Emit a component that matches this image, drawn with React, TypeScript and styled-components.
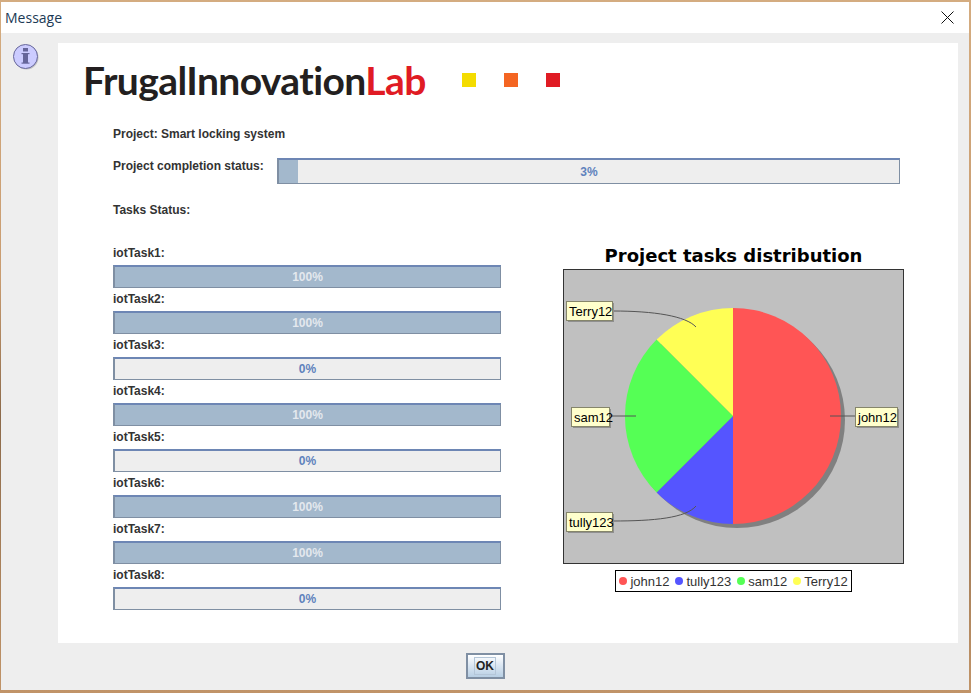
import React from 'react';
import styled, { createGlobalStyle } from 'styled-components';

const GlobalStyle = createGlobalStyle`
    html, body {
        margin: 0;
        padding: 0;
        background: #d2a87c;
    }
`

const Desktop = styled.div`
    width: 971px;
    height: 693px;
    box-sizing: border-box;
    padding: 2px 2px 3px 1px;
    overflow: hidden;
    background: linear-gradient(180deg, #d4ac80 0%, #c99c70 40%, #8c6a4a 60%, #c19468 100%);
`

const Window = styled.div`
    display: flex;
    flex-direction: column;
    height: 100%;
    background: #eeeeee;
    font-family: "Liberation Sans", Arial, sans-serif;
`

const TitleBar = styled.div`
    display: flex;
    align-items: center;
    justify-content: space-between;
    height: 31px;
    padding: 0 15px 0 4px;
    background: #fff;
    font-family: "Open Sans", sans-serif;
    font-size: 14px;
    color: #1c3a55;
`

const Body = styled.div`
    display: flex;
    padding: 10px 10px 0 0;
`

const IconGutter = styled.div`
    width: 57px;
    padding-left: 11px;
    box-sizing: border-box;
`

const Panel = styled.div`
    width: 900px;
    height: 600px;
    box-sizing: border-box;
    padding: 17px 0 0 0;
    background: #fff;
`

const LogoRow = styled.div`
    display: flex;
    align-items: center;
    height: 40px;
    padding-left: 25px;
`

const Logo = styled.div`
    width: 337px;
    margin-right: 42px;
    font-family: Lato, sans-serif;
    font-weight: 700;
    font-size: 39px;
    letter-spacing: -0.6px;
    line-height: 40px;
    white-space: nowrap;
    color: #231f20;

    span {
        color: #e01b24;
    }
`

const Square = styled.div<{ $color: string }>`
    width: 14px;
    height: 14px;
    margin-right: 28px;
    background: ${(p) => p.$color};
`

const Content = styled.div`
    padding-left: 55px;
`

const Label = styled.div`
    font-size: 12px;
    font-weight: 700;
    line-height: 16px;
    color: #333;
    white-space: nowrap;
`

const ProjectName = styled(Label)`
    margin-top: 26px;
`

const CompletionRow = styled.div`
    display: flex;
    margin-top: 16px;
`

const CompletionLabel = styled(Label)`
    width: 164px;
`

const TasksHeading = styled(Label)`
    margin-top: 18px;
`

const Columns = styled.div`
    display: flex;
    margin-top: 24px;
`

const TaskColumn = styled.div`
    width: 388px;
    margin-right: 62px;
`

const TaskLabel = styled(Label)`
    height: 23px;
    line-height: 23px;
`

const Bar = styled.div<{ $height: number; $width: number }>`
    position: relative;
    width: ${(p) => p.$width}px;
    height: ${(p) => p.$height}px;
    box-sizing: border-box;
    background: #eeeeee;
    border: 1px solid #7f8fa3;
    border-top: 2px solid #6d86b4;
    border-left: 2px solid #7f8fa3;
`

const BarFill = styled.div`
    height: 100%;
    background: #a3b8cc;
`

const BarText = styled.div<{ $full: boolean }>`
    position: absolute;
    inset: 0;
    display: flex;
    align-items: center;
    justify-content: center;
    font-size: 12px;
    font-weight: 700;
    color: ${(p) => (p.$full ? '#e4e8ee' : '#5f82bd')};
`

const ChartColumn = styled.div`
    display: flex;
    flex-direction: column;
    align-items: center;
    width: 341px;
`

const ChartTitle = styled.div`
    height: 27px;
    line-height: 27px;
    font-family: "DejaVu Sans", sans-serif;
    font-size: 18px;
    font-weight: 700;
    color: #000;
    white-space: nowrap;
`

const Plot = styled.div`
    width: 341px;
    height: 295px;
    box-sizing: border-box;
    border: 1px solid #333;
    background: #c0c0c0;

    svg {
        display: block;
    }
`

const Legend = styled.div`
    display: flex;
    align-items: center;
    gap: 6px;
    height: 22px;
    box-sizing: border-box;
    margin-top: 6px;
    padding: 0 3px;
    border: 1px solid #000;
    background: #fff;
    font-family: "Liberation Sans", sans-serif;
    font-size: 13px;
    color: #333;
`

const LegendItem = styled.div`
    display: flex;
    align-items: center;
    gap: 3px;
`

const Dot = styled.span<{ $color: string }>`
    width: 8px;
    height: 8px;
    border-radius: 50%;
    background: ${(p) => p.$color};
`

const Footer = styled.div`
    display: flex;
    flex: 1;
    align-items: center;
    justify-content: center;
    padding-bottom: 1px;
`

const OkButton = styled.button`
    width: 39px;
    height: 26px;
    padding: 0;
    box-sizing: border-box;
    border: 2px solid #7f8fa3;
    border-radius: 0;
    background: linear-gradient(180deg, #fff 0%, #dde8f3 45%, #b8cfe4 100%);
    font-family: "Liberation Sans", sans-serif;
    font-size: 12px;
    font-weight: 700;
    color: #222;

    span {
        display: inline-block;
        padding: 1px;
        border: 1px solid #b4c6d8;
        line-height: 14px;
    }
`

const InfoIcon = () => (
    <svg width="28" height="28" viewBox="0 0 28 28">
        <circle cx="14.5" cy="14.5" r="12" fill="#9a9a9a" opacity="0.5" />
        <circle cx="13.5" cy="13.5" r="12" fill="#ccccff" stroke="#66669a" strokeWidth="1" />
        <rect x="11" y="5" width="5" height="3.5" fill="#66669a" />
        <rect x="11" y="10" width="5" height="10" fill="#66669a" />
        <rect x="9.5" y="10" width="8" height="1.2" fill="#66669a" />
        <rect x="9.5" y="19.5" width="8" height="1.2" fill="#66669a" />
    </svg>
)

const CloseIcon = () => (
    <svg width="13" height="13" viewBox="0 0 13 13">
        <path d="M0.5 0.5 L12.5 12.5 M12.5 0.5 L0.5 12.5" stroke="#111" strokeWidth="1" fill="none" />
    </svg>
)

const tasks = [
    { name: 'iotTask1', value: 100 },
    { name: 'iotTask2', value: 100 },
    { name: 'iotTask3', value: 0 },
    { name: 'iotTask4', value: 100 },
    { name: 'iotTask5', value: 0 },
    { name: 'iotTask6', value: 100 },
    { name: 'iotTask7', value: 100 },
    { name: 'iotTask8', value: 0 },
]

const legend = [
    { name: 'john12', color: '#ff5555' },
    { name: 'tully123', color: '#5555ff' },
    { name: 'sam12', color: '#55ff55' },
    { name: 'Terry12', color: '#ffff55' },
]

const ProgressBar = ({ value, width, height }: { value: number; width: number; height: number }) => (
    <Bar $width={width} $height={height}>
        <BarFill style={{ width: `${value}%` }} />
        <BarText $full={value === 100}>{value}%</BarText>
    </Bar>
)

const ChartTag = ({ x, y, w, text }: { x: number; y: number; w: number; text: string }) => (
    <g>
        <rect x={x + 2} y={y + 2} width={w} height={19} fill="#8f8f8f" />
        <rect x={x + 0.5} y={y + 0.5} width={w} height={19} fill="#ffffcc" stroke="#85856a" />
        <text x={x + 3} y={y + 15} fontFamily="Liberation Sans, sans-serif" fontSize="13" fill="#000">{text}</text>
    </g>
)

// coordinates are relative to the plot's inner corner
const PieChart = () => (
    <svg width="339" height="293" viewBox="0 0 339 293">
        <circle cx="173" cy="150" r="108" fill="#808080" />
        <path d="M169 38 A108 108 0 0 1 169 254 Z" fill="#ff5555" />
        <path d="M169 146 L169 254 A108 108 0 0 1 92.6 222.4 Z" fill="#5555ff" />
        <path d="M169 146 L92.6 222.4 A108 108 0 0 1 92.6 69.6 Z" fill="#55ff55" />
        <path d="M169 146 L92.6 69.6 A108 108 0 0 1 169 38 Z" fill="#ffff55" />
        <g fill="none" stroke="#555" strokeWidth="1">
            <path d="M49 41 C90 41 122 46 132 57" />
            <path d="M49 251 C90 251 122 248 132 236" />
            <path d="M46 146 H72" />
            <path d="M266 146 H291" />
        </g>
        <ChartTag x={2} y={31} w={46} text="Terry12" />
        <ChartTag x={7} y={137} w={38} text="sam12" />
        <ChartTag x={2} y={242} w={46} text="tully123" />
        <ChartTag x={291} y={137} w={42} text="john12" />
    </svg>
)

const App = () => {
    return (
        <Desktop>
            <GlobalStyle />
            <Window>
                <TitleBar>
                    Message
                    <CloseIcon />
                </TitleBar>
                <Body>
                    <IconGutter>
                        <InfoIcon />
                    </IconGutter>
                    <Panel>
                        <LogoRow>
                            <Logo>FrugalInnovation<span>Lab</span></Logo>
                            <Square $color="#f4dc00" />
                            <Square $color="#f46522" />
                            <Square $color="#e01b24" />
                        </LogoRow>
                        <Content>
                            <ProjectName>Project: Smart locking system</ProjectName>
                            <CompletionRow>
                                <CompletionLabel>Project completion status:</CompletionLabel>
                                <ProgressBar value={3} width={623} height={26} />
                            </CompletionRow>
                            <TasksHeading>Tasks Status:</TasksHeading>
                            <Columns>
                                <TaskColumn>
                                    {tasks.map((task) => (
                                        <div key={task.name}>
                                            <TaskLabel>{task.name}:</TaskLabel>
                                            <ProgressBar value={task.value} width={388} height={23} />
                                        </div>
                                    ))}
                                </TaskColumn>
                                <ChartColumn>
                                    <ChartTitle>Project tasks distribution</ChartTitle>
                                    <Plot>
                                        <PieChart />
                                    </Plot>
                                    <Legend>
                                        {legend.map((item) => (
                                            <LegendItem key={item.name}>
                                                <Dot $color={item.color} />
                                                {item.name}
                                            </LegendItem>
                                        ))}
                                    </Legend>
                                </ChartColumn>
                            </Columns>
                        </Content>
                    </Panel>
                </Body>
                <Footer>
                    <OkButton><span>OK</span></OkButton>
                </Footer>
            </Window>
        </Desktop>
    )
}

export default App;
